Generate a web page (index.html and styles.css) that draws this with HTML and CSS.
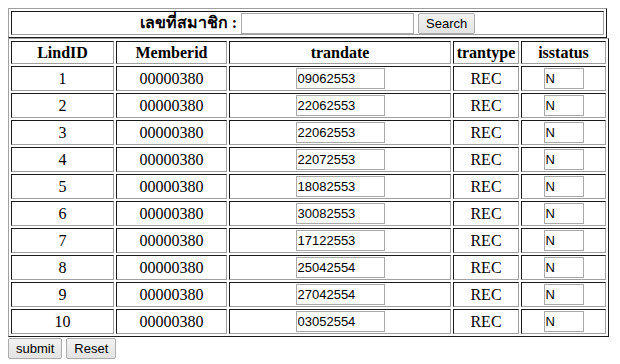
FILE: index.html
```html
<!DOCTYPE html>
<html lang="th">
<head>
  <meta charset="UTF-8">
  <title>รายการสมาชิก</title>
  <link rel="stylesheet" href="styles.css">
</head>
<body>
<form>
  <table class="search">
    <tr>
      <td>
        <span class="label">เลขที่สมาชิก :</span>
        <input type="text" class="member" name="memberid">
        <button type="button" class="btn">Search</button>
      </td>
    </tr>
  </table>

  <table class="list">
    <colgroup>
      <col class="c-id"><col class="c-member"><col class="c-date"><col class="c-type"><col class="c-status">
    </colgroup>
    <tr>
      <th>LindID</th>
      <th>Memberid</th>
      <th>trandate</th>
      <th>trantype</th>
      <th>isstatus</th>
    </tr>
    <tr><td>1</td><td>00000380</td><td><input type="text" class="date" value="09062553"></td><td>REC</td><td><input type="text" class="status" value="N"></td></tr>
    <tr><td>2</td><td>00000380</td><td><input type="text" class="date" value="22062553"></td><td>REC</td><td><input type="text" class="status" value="N"></td></tr>
    <tr><td>3</td><td>00000380</td><td><input type="text" class="date" value="22062553"></td><td>REC</td><td><input type="text" class="status" value="N"></td></tr>
    <tr><td>4</td><td>00000380</td><td><input type="text" class="date" value="22072553"></td><td>REC</td><td><input type="text" class="status" value="N"></td></tr>
    <tr><td>5</td><td>00000380</td><td><input type="text" class="date" value="18082553"></td><td>REC</td><td><input type="text" class="status" value="N"></td></tr>
    <tr><td>6</td><td>00000380</td><td><input type="text" class="date" value="30082553"></td><td>REC</td><td><input type="text" class="status" value="N"></td></tr>
    <tr><td>7</td><td>00000380</td><td><input type="text" class="date" value="17122553"></td><td>REC</td><td><input type="text" class="status" value="N"></td></tr>
    <tr><td>8</td><td>00000380</td><td><input type="text" class="date" value="25042554"></td><td>REC</td><td><input type="text" class="status" value="N"></td></tr>
    <tr><td>9</td><td>00000380</td><td><input type="text" class="date" value="27042554"></td><td>REC</td><td><input type="text" class="status" value="N"></td></tr>
    <tr><td>10</td><td>00000380</td><td><input type="text" class="date" value="03052554"></td><td>REC</td><td><input type="text" class="status" value="N"></td></tr>
  </table>

  <div class="actions">
    <button type="submit" class="btn">submit</button>
    <button type="reset" class="btn">Reset</button>
  </div>
</form>
</body>
</html>
```

FILE: styles.css
```css
body { margin: 8px; font-family: 'Liberation Serif', 'Times New Roman', serif; font-size: 16px; color: #000; background: #fff; }
form { margin: 0; }

/* old style border=1 tables: outset frame, inset cells */
table { border-collapse: separate; border-spacing: 2px; table-layout: fixed;
  border: 1px solid; border-color: #a0a0a0 #1a1a1a #1a1a1a #a0a0a0; }
td, th { box-sizing: border-box; padding: 1px; text-align: center;
  border: 1px solid; border-color: #1a1a1a #a0a0a0 #a0a0a0 #1a1a1a; }
th { font-weight: bold; height: 23px; line-height: 18px; }
td { height: 25px; line-height: 18px; }

.search { width: 599px; }
.search td { height: 24px; padding: 0; line-height: 20px; }
.search .label { font-weight: bold; font-size: 16px; line-height: 1; vertical-align: middle; }
.search .member { width: 173px; }

.list { width: 601px; }
.c-id { width: 103px; }
.c-member { width: 111px; }
.c-date { width: 222px; }
.c-type { width: 66px; }
.c-status { width: 85px; }

input[type=text] { box-sizing: border-box; height: 21px; margin: 0; padding: 1px 1px;
  font-family: 'Liberation Sans', Arial, sans-serif; font-size: 13px; color: #000;
  border: 1px solid #a9a9a9; background: #fff; vertical-align: middle; }
.date { width: 89px; }
.status { width: 40px; }

.btn { box-sizing: border-box; height: 21px; margin: 0; padding: 0 7px;
  font-family: 'Liberation Sans', Arial, sans-serif; font-size: 13px; color: #000;
  border: 1px solid #acacac; border-radius: 2px;
  background: linear-gradient(#f2f2f2, #e3e3e3); vertical-align: middle; }

.actions { display: flex; gap: 4px; margin-top: 1px; }
```
